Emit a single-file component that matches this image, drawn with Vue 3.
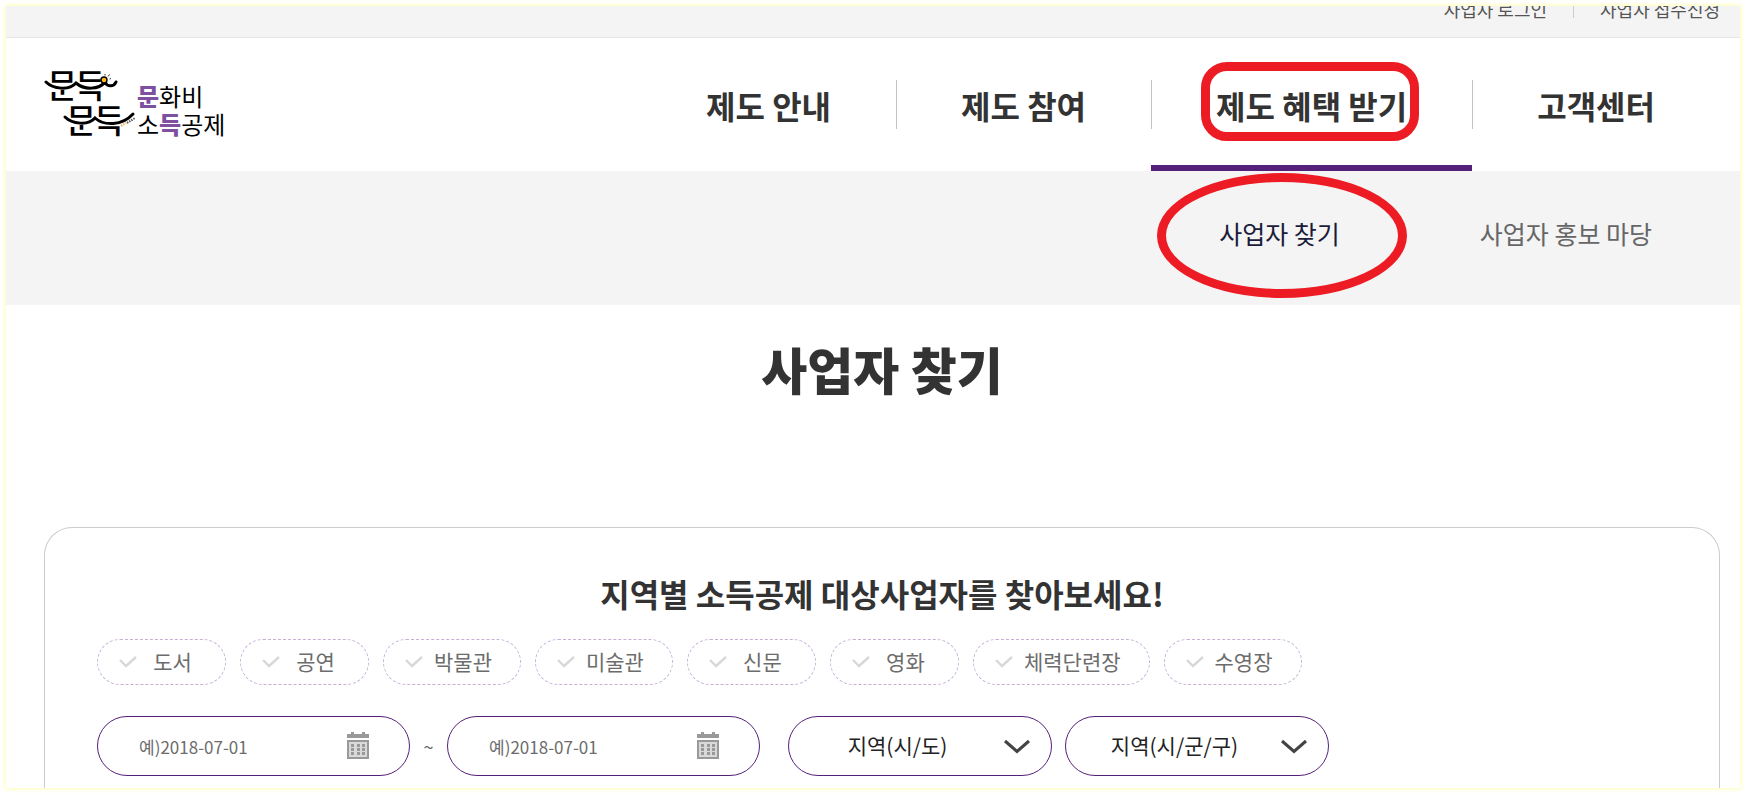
<template>
  <div class="page">
    <!-- 상단 유틸 메뉴 -->
    <div class="top-bar">
      <ul class="util-menu">
        <li v-for="item in utilMenu" :key="item"><a href="#">{{ item }}</a></li>
      </ul>
    </div>

    <!-- 헤더 -->
    <header class="header">
      <a href="#" class="logo">
        <svg class="logo-mark" viewBox="0 0 92 72" width="92" height="72">
          <g class="logo-word">
            <text x="3" y="29">문</text>
            <text x="31" y="29">득</text>
            <text x="22" y="64">문</text>
            <text x="50" y="64">득</text>
          </g>
          <!-- 가로획 자리를 비우고 곡선으로 잇는다 -->
          <g fill="none" stroke="#fff" stroke-width="6">
            <path d="M2 18H62" />
            <path d="M21 53H82" />
          </g>
          <g fill="none" stroke="#000" stroke-width="3" stroke-linecap="round">
            <path d="M2 13C9 20 25 22 32 14C40 21 55 21 61 13C63 18 70 18 72 13" />
            <path d="M21 48C28 55 44 57 51 49C60 57 78 57 89 45" />
          </g>
          <circle cx="60" cy="11" r="3" fill="#fdb913" stroke="#000" stroke-width="1.400" />
          <path d="M61 6.500V5M64 7.500L65.500 5.500M65.500 10L67 9.500" stroke="#000" stroke-width=".8" />
          <path d="M77 57L82 54" stroke="#f5b04c" stroke-width="2" stroke-dasharray="1.500 1" />
          <path d="M83 54L91 49" stroke="#555" stroke-width="2" stroke-dasharray="1.500 1" />
        </svg>
        <span class="logo-text">
          <span><b>문</b>화비</span>
          <span>소<b>득</b>공제</span>
        </span>
      </a>
      <nav class="gnb">
        <a
          v-for="menu in menus"
          :key="menu"
          href="#"
          :class="['gnb-item', { active: menu === activeMenu }]"
        >
          {{ menu }}
          <span v-if="menu === activeMenu" class="mark mark-box"></span>
        </a>
      </nav>
    </header>

    <!-- 서브 메뉴 -->
    <nav class="lnb">
      <a
        v-for="sub in subMenus"
        :key="sub"
        href="#"
        :class="['lnb-item', { active: sub === activeSub }]"
      >
        {{ sub }}
        <span v-if="sub === activeSub" class="mark mark-circle"></span>
      </a>
    </nav>

    <main class="content">
      <h1 class="title">사업자 찾기</h1>

      <section class="search-box">
        <h2 class="search-title">지역별 소득공제 대상사업자를 찾아보세요!</h2>

        <!-- 업종 선택 -->
        <div class="chips">
          <label v-for="c in categories" :key="c" class="chip">
            <input v-model="checked" type="checkbox" :value="c" />
            <svg class="chip-check" viewBox="0 0 18 12" width="18" height="12">
              <path d="M1 4L7 10L17 1" fill="none" stroke="currentColor" stroke-width="2.400" />
            </svg>
            <span>{{ c }}</span>
          </label>
        </div>

        <!-- 기간 / 지역 -->
        <div class="filters">
          <div class="date-range">
            <template v-for="(d, i) in dates" :key="d.label">
              <span v-if="i > 0" class="tilde">~</span>
              <div class="date-field">
                <input v-model="d.value" type="text" :aria-label="d.label" placeholder="예)2018-07-01" />
                <button type="button" class="cal-btn" aria-label="달력">
                  <svg viewBox="0 0 22 27" width="22" height="27">
                    <path d="M0 2H4V0H7V2H15V0H18V2H22V6H0Z" fill="#999" />
                    <rect x="1" y="9" width="20" height="17" fill="#d9d9d9" stroke="#999" stroke-width="2" />
                    <g fill="#999">
                      <template v-for="y in [12, 16, 20]" :key="y">
                        <rect v-for="x in [4, 10, 15]" :key="x" :x="x" :y="y" width="3" height="3" />
                      </template>
                    </g>
                  </svg>
                </button>
              </div>
            </template>
          </div>
          <div class="regions">
            <div v-for="r in regions" :key="r" class="select-field">
              <select :aria-label="r">
                <option>{{ r }}</option>
              </select>
              <svg class="arrow" viewBox="0 0 26 15" width="26" height="15">
                <path d="M1 2L13 12.500L25 2" fill="none" stroke="#444" stroke-width="3" />
              </svg>
            </div>
          </div>
        </div>
      </section>
    </main>
  </div>
</template>

<script setup>
import { ref } from 'vue'

const utilMenu = ['사업자 로그인', '사업자 접수신청']
const menus = ['제도 안내', '제도 참여', '제도 혜택 받기', '고객센터']
const subMenus = ['사업자 찾기', '사업자 홍보 마당']
const categories = ['도서', '공연', '박물관', '미술관', '신문', '영화', '체력단련장', '수영장']
const regions = ['지역(시/도)', '지역(시/군/구)']

const activeMenu = ref('제도 혜택 받기')
const activeSub = ref('사업자 찾기')
const checked = ref([])
const dates = ref([
  { label: '시작일', value: '' },
  { label: '종료일', value: '' }
])
</script>

<style>
body {
  background: #fff;
}
</style>

<style scoped>
* {
  box-sizing: border-box;
}

.page {
  display: flex;
  flex-direction: column;
  height: calc(100vh - 12px);
  margin: 6px;
  overflow: hidden;
  background: #fff;
  box-shadow: 0 0 4px 1px #ffffb4;
  color: #333;
  font-family: "Noto Sans CJK KR", "Noto Sans", sans-serif;
}

a {
  color: inherit;
  text-decoration: none;
}

.top-bar {
  flex: none;
  height: 32px;
  padding: 0 20px 0 38px;
  background: #f4f4f4;
  border-bottom: 1px solid #e6e6e6;
}

.util-menu {
  display: flex;
  justify-content: flex-end;
  align-items: center;
  margin: -10px 0 0;
  padding: 0;
  list-style: none;
  font-size: 18px;
  line-height: 26px;
  color: #555;
}

.util-menu li {
  display: flex;
  align-items: center;
}

.util-menu li + li::before {
  content: "";
  width: 1px;
  height: 18px;
  margin: 0 26px;
  background: #ccc;
}

.header {
  display: flex;
  flex: none;
  justify-content: space-between;
  height: 133px;
  padding: 0 20px 0 38px;
}

.logo {
  display: flex;
  align-items: center;
  color: #000;
}

.logo-word {
  font-size: 33px;
  font-weight: 500;
}

.logo-text {
  display: flex;
  flex-direction: column;
  margin: 10px 0 0 1px;
  font-size: 24px;
  line-height: 28px;
}

.logo-text b {
  color: #7d50a0;
  font-weight: 900;
}

.gnb {
  display: flex;
}

.gnb-item {
  position: relative;
  display: flex;
  align-items: center;
  padding: 0 65px;
  font-size: 32px;
  font-weight: 700;
  white-space: nowrap;
}

.gnb-item + .gnb-item::before {
  content: "";
  position: absolute;
  left: 0;
  top: 42px;
  width: 1px;
  height: 49px;
  background: #c3c3c3;
}

.gnb-item.active::after {
  content: "";
  position: absolute;
  left: 0;
  right: 0;
  bottom: 0;
  height: 6px;
  background: #55207a;
}

.lnb {
  display: flex;
  flex: none;
  justify-content: flex-end;
  align-items: center;
  gap: 140px;
  height: 134px;
  padding: 0 88px 10px 38px;
  background: #f4f4f4;
  font-size: 25px;
  color: #666;
}

.lnb-item {
  position: relative;
  white-space: nowrap;
}

.lnb-item.active {
  color: #1b1b3a;
}

/* 강조 표시 */
.mark {
  position: absolute;
  border: 9px solid #ed1c24;
  pointer-events: none;
}

.mark-box {
  top: 24px;
  left: 50px;
  right: 53px;
  height: 79px;
  border-radius: 26px;
}

.mark-circle {
  top: -42px;
  left: -62px;
  width: 250px;
  height: 125px;
  border-radius: 50%;
}

.content {
  display: flex;
  flex: 1;
  flex-direction: column;
  min-height: 0;
  padding: 0 20px 0 38px;
}

.title {
  flex: none;
  margin: 26px 0 122px;
  font-size: 50px;
  font-weight: 900;
  line-height: 74px;
  text-align: center;
}

.search-box {
  flex: 1;
  padding: 42px 52px 0;
  border: 1px solid #ccc;
  border-bottom: 0;
  border-radius: 28px 28px 0 0;
}

.search-title {
  margin: 0 0 23px;
  font-size: 32px;
  font-weight: 700;
  line-height: 46px;
  text-align: center;
}

.chips {
  display: flex;
  flex-wrap: wrap;
  gap: 14px;
}

.chip {
  position: relative;
  min-width: 129px;
  height: 46px;
  padding: 0 28px 0 50px;
  border: 1px dashed #c5b0d5;
  border-radius: 23px;
  font-size: 21px;
  line-height: 42px;
  text-align: center;
  color: #6c6c6c;
  cursor: pointer;
}

.chip input {
  position: absolute;
  inset: 0;
  width: 100%;
  height: 100%;
  margin: 0;
  opacity: 0;
  cursor: pointer;
}

.chip-check {
  position: absolute;
  top: 16px;
  left: 21px;
  color: #d8d8d8;
}

.chip input:checked + .chip-check {
  color: #55207a;
}

.filters {
  display: flex;
  flex-wrap: wrap;
  gap: 28px;
  margin-top: 31px;
}

.date-range,
.regions {
  display: flex;
  align-items: center;
}

.regions {
  gap: 13px;
}

.tilde {
  width: 37px;
  text-align: center;
  font-size: 18px;
  color: #666;
}

.date-field,
.select-field {
  position: relative;
  height: 60px;
}

.date-field {
  width: 313px;
}

.select-field {
  width: 264px;
}

.date-field input,
.select-field select {
  width: 100%;
  height: 100%;
  margin: 0;
  border: 1px solid #55207a;
  border-radius: 30px;
  background: #fff;
  font-family: inherit;
}

.date-field input {
  padding: 0 70px 0 41px;
  font-size: 17px;
  color: #333;
}

.date-field input::placeholder {
  color: #6c6c6c;
}

.cal-btn {
  position: absolute;
  top: 16px;
  right: 41px;
  padding: 0;
  border: 0;
  background: none;
  line-height: 0;
  cursor: pointer;
}

.select-field select {
  padding: 0 45px 2px 0;
  appearance: none;
  font-size: 21px;
  text-align: center;
  text-align-last: center;
  color: #222;
}

.arrow {
  position: absolute;
  top: 23px;
  right: 22px;
  pointer-events: none;
}
</style>
